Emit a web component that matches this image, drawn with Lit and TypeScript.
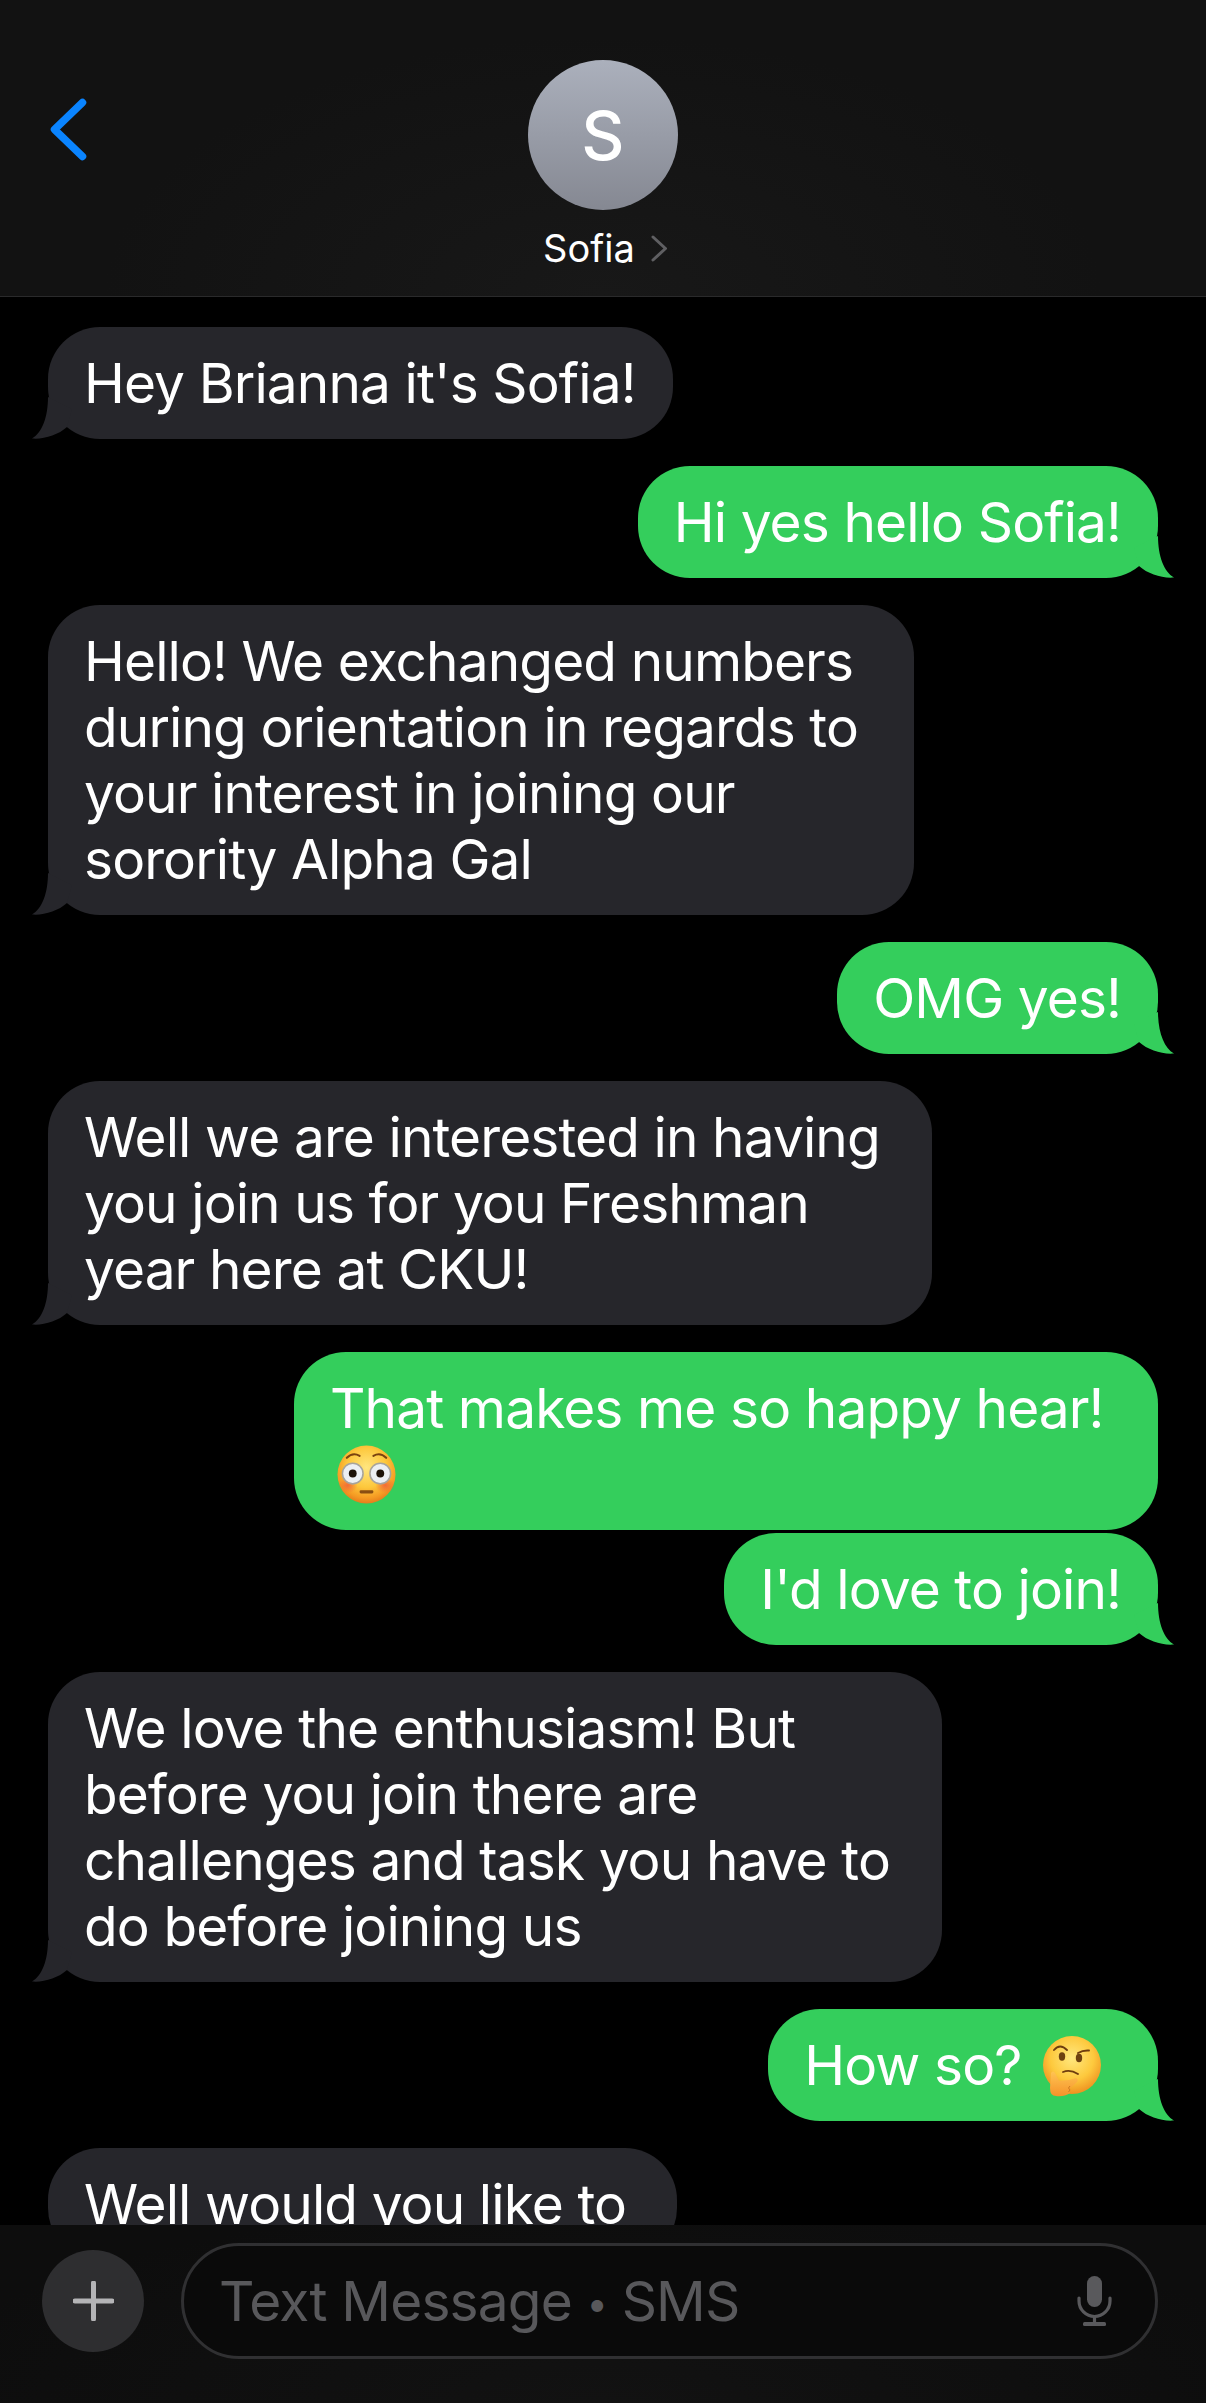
import { LitElement, html, css } from "lit";
import { customElement } from "lit/decorators.js";

const tail = html`<svg class="tail" viewBox="0 0 40 50" aria-hidden="true"><path d="M16 8 C16 28 10 44 0 49.5 C12 50.5 26 46 35 38 L40 20 Z" fill="currentColor"/></svg>`;

const flushed = html`<svg class="emoji flushed" viewBox="0 0 60 60" aria-hidden="true">
  <defs>
    <radialGradient id="fl" cx="50%" cy="38%" r="62%"><stop offset="0" stop-color="#ffe680"/><stop offset=".55" stop-color="#fdc83c"/><stop offset=".85" stop-color="#f59a23"/><stop offset="1" stop-color="#e57d1c"/></radialGradient>
    <radialGradient id="bl"><stop offset="0" stop-color="#f0563a" stop-opacity=".75"/><stop offset="1" stop-color="#f0563a" stop-opacity="0"/></radialGradient>
  </defs>
  <circle cx="30" cy="30" r="29.5" fill="url(#fl)"/>
  <ellipse cx="11" cy="41" rx="10" ry="8" fill="url(#bl)"/><ellipse cx="49" cy="41" rx="10" ry="8" fill="url(#bl)"/>
  <path d="M10 13 Q16 7 23 11" stroke="#7a4310" stroke-width="2.2" fill="none" stroke-linecap="round"/>
  <path d="M37 11 Q44 7 50 13" stroke="#7a4310" stroke-width="2.2" fill="none" stroke-linecap="round"/>
  <circle cx="16" cy="29" r="10.5" fill="#eceff3" stroke="#a8a49c" stroke-width="1.6"/><circle cx="44" cy="29" r="10.5" fill="#eceff3" stroke="#a8a49c" stroke-width="1.6"/>
  <circle cx="16" cy="29" r="4" fill="#1c1208"/><circle cx="44" cy="29" r="4" fill="#1c1208"/>
  <rect x="23" y="46" width="14" height="3.2" rx="1.4" fill="#8a4e12"/>
</svg>`;

const thinking = html`<svg class="emoji thinking" viewBox="0 0 60 62" aria-hidden="true">
  <defs>
    <radialGradient id="th" cx="50%" cy="38%" r="62%"><stop offset="0" stop-color="#ffe87f"/><stop offset=".6" stop-color="#fdc93d"/><stop offset="1" stop-color="#ee9120"/></radialGradient>
    <linearGradient id="hand" x1="0" y1="0" x2="0" y2="1"><stop offset="0" stop-color="#ffc453"/><stop offset="1" stop-color="#f5932a"/></linearGradient>
  </defs>
  <circle cx="30" cy="29" r="29" fill="url(#th)"/>
  <path d="M12 14 Q18 7 25 14" stroke="#6e3d0e" stroke-width="1.9" fill="none" stroke-linecap="round"/>
  <path d="M36 17 Q41 14 47 14.5" stroke="#6e3d0e" stroke-width="1.9" fill="none" stroke-linecap="round"/>
  <ellipse cx="20" cy="20.5" rx="3.2" ry="4.2" fill="#6e4210"/><ellipse cx="37" cy="22" rx="3.2" ry="4.2" fill="#6e4210"/>
  <path d="M21 36 Q28 33 36 38" stroke="#6e3d0e" stroke-width="1.9" fill="none" stroke-linecap="round"/>
  <path d="M9 37 Q11 34 13 37 L17 45 Q26 45 34 42 Q37 43 35 46 Q31 50 28 52 L28 57 Q22 61 14 60 Q8 60 8 52 Z" fill="url(#hand)"/>
  <path d="M28 50 l-1.5 2 1.5 2 -1.5 2" stroke="#cf7a20" stroke-width="1" fill="none"/>
</svg>`;

const icon = {
  back: html`<svg class="back" viewBox="0 0 37 63" aria-hidden="true"><path d="M32.500 4.500 L4.500 31.500 L32.500 58.500" fill="none" stroke="#0a84ff" stroke-width="7.500" stroke-linecap="round" stroke-linejoin="round"/></svg>`,
  chev: html`<svg class="chev" viewBox="0 0 17 27" aria-hidden="true"><path d="M2 2 L14.500 13.500 L2 25" fill="none" stroke="#5f5f62" stroke-width="3" stroke-linecap="round" stroke-linejoin="round"/></svg>`,
  plus: html`<svg class="plus" viewBox="0 0 41 40" aria-hidden="true"><path d="M20.500 2 V38 M2 20 H39" stroke="#b4b4b6" stroke-width="5" stroke-linecap="round"/></svg>`,
  mic: html`<svg class="mic" viewBox="0 0 35 50" aria-hidden="true"><rect x="10" y="0" width="15" height="31" rx="7.500" fill="#59595c"/><path d="M2 22 V25 A15.500 15.500 0 0 0 33 25 V22" fill="none" stroke="#59595c" stroke-width="3.200" stroke-linecap="round"/><path d="M17.500 40 V47" stroke="#59595c" stroke-width="3.200"/><rect x="6" y="46" width="23" height="4" rx="1.500" fill="#59595c"/></svg>`,
};

type Msg = { me: boolean; tail: boolean; body: unknown; cls?: string; width?: number };

const messages: Msg[] = [
  { me: false, tail: true, body: html`Hey Brianna it's Sofia!` },
  { me: true, tail: true, body: html`Hi yes hello Sofia!` },
  { me: false, tail: true, width: 866, body: html`Hello! We exchanged numbers<br />during orientation in regards to<br />your interest in joining our<br />sorority Alpha Gal` },
  { me: true, tail: true, body: html`OMG yes!` },
  { me: false, tail: true, width: 884, body: html`Well we are interested in having<br />you join us for you Freshman<br />year here at CKU!` },
  { me: true, tail: false, cls: "tight", width: 864, body: html`That makes me so happy hear!<br />${flushed}` },
  { me: true, tail: true, body: html`I'd love to join!` },
  { me: false, tail: true, width: 894, body: html`We love the enthusiasm! But<br />before you join there are<br />challenges and task you have to<br />do before joining us` },
  { me: true, tail: true, body: html`How so? ${thinking}` },
  { me: false, tail: false, width: 629, body: html`Well would you like to` },
];

@customElement("app-root")
export class AppRoot extends LitElement {
  static styles = css`
    :host {
      display: block;
      width: 1206px;
      height: 2403px;
      background: #000;
      font-family: Inter, "Liberation Sans", sans-serif;
      color: #fff;
      overflow: hidden;
    }
    .screen { display: flex; flex-direction: column; height: 2403px; }
    header {
      flex: none;
      height: 297px;
      box-sizing: border-box;
      border-bottom: 1px solid #2a2a2b;
      background: radial-gradient(ellipse 500px 260px at 50% 100%, #181818, #121212 100%);
      position: relative;
      display: flex;
      flex-direction: column;
      align-items: center;
      padding-top: 60px;
    }
    .back { position: absolute; left: 50px; top: 98px; width: 37px; height: 63px; }
    .avatar {
      width: 150px; height: 150px; border-radius: 50%;
      background: linear-gradient(#abb0bc, #858892);
      display: flex; align-items: center; justify-content: center;
      font-size: 67px; font-weight: 500; line-height: 1;
    }
    .name {
      margin-top: 16px; display: flex; align-items: center; gap: 16px;
      font-size: 38px; line-height: 44px; letter-spacing: 0;
      padding-left: 5px;
    }
    .chev { width: 17px; height: 27px; }
    main {
      flex: 1; min-height: 0; overflow: hidden;
      display: flex; flex-direction: column; gap: 27px;
      padding: 30px 48px 0;
    }
    .bubble {
      position: relative; flex: none;
      padding: 23px 37px 23px 36px;
      border-radius: 52px;
      font-size: 55px; line-height: 66px;
      letter-spacing: -0.9px;
      white-space: nowrap;
      width: max-content;
    }
    .sized { box-sizing: border-box; }
    .them { background: #26262b; color: #fff; align-self: flex-start; }
    .me { background: #34ce5c; color: #fff; align-self: flex-end; }
    .tight { margin-bottom: -24px; }
    .tail { position: absolute; bottom: 0; width: 40px; height: 50px; }
    .them .tail { left: -16px; color: #26262b; }
    .me .tail { right: -16px; color: #34ce5c; transform: scaleX(-1); }
    .emoji { display: inline-block; }
    .flushed { width: 59px; height: 59px; margin-left: 7px; vertical-align: -10px; }
    .thinking { width: 60px; height: 62px; margin-left: 6px; margin-right: 19px; vertical-align: -13px; }
    footer {
      flex: none; height: 178px; box-sizing: border-box;
      background: radial-gradient(ellipse 700px 200px at 50% 100%, #121212, #0d0d0d 100%);
      display: flex; align-items: flex-start; gap: 37px;
      padding: 18px 48px 0 42px;
    }
    .add {
      flex: none; width: 102px; height: 102px; border-radius: 50%;
      margin-top: 7px; background: #2e2e30;
      display: flex; align-items: center; justify-content: center;
    }
    .plus { width: 41px; height: 40px; }
    .input {
      flex: 1; height: 116px; box-sizing: border-box;
      border: 3px solid #303032; border-radius: 58px;
      background: #0a0a0a;
      display: flex; align-items: center; justify-content: space-between;
      padding: 0 43px 0 35px;
      font-size: 55px; letter-spacing: -0.85px; color: #58585b;
    }
    .dot { font-size: 38px; vertical-align: 4px; }
    .mic { width: 35px; height: 50px; }
  `;

  render() {
    return html`<div class="screen">
      <header>
        ${icon.back}
        <div class="avatar">S</div>
        <div class="name"><span>Sofia</span>${icon.chev}</div>
      </header>
      <main>
        ${messages.map(
          (m) => html`<div
            class="bubble ${m.me ? "me" : "them"} ${m.cls ?? ""} ${m.width ? "sized" : ""}"
            style=${m.width ? `width:${m.width}px` : ""}
          >${m.body}${m.tail ? tail : ""}</div>`
        )}
      </main>
      <footer>
        <div class="add">${icon.plus}</div>
        <div class="input"><span>Text Message <span class="dot">•</span> SMS</span>${icon.mic}</div>
      </footer>
    </div>`;
  }
}
